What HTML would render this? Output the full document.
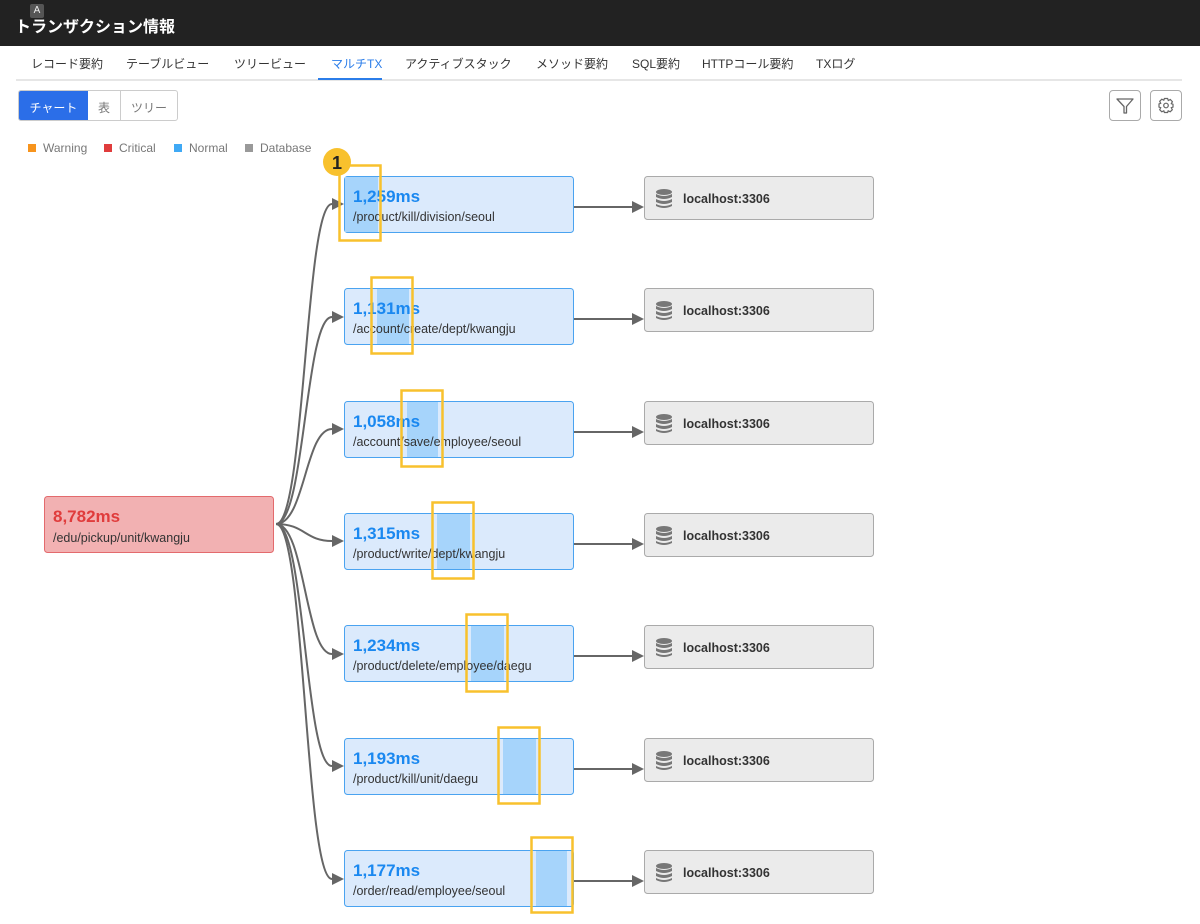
<!DOCTYPE html>
<html><head><meta charset="utf-8"><style>
*{margin:0;padding:0;box-sizing:border-box}
body{width:1200px;height:924px;background:#fff;font-family:"Liberation Sans","Noto Sans CJK JP",sans-serif;position:relative;overflow:hidden;color:#333}
.hdr{position:absolute;left:0;top:0;width:1200px;height:46px;background:#222;color:#fff;font-size:16px;font-weight:bold;padding:13px 15px}
.akey{position:absolute;left:30px;top:4px;width:14px;height:14px;background:#555;border-radius:2px;font-size:10px;font-weight:normal;text-align:center;line-height:14px;color:#eee}
.tabs{position:absolute;left:16px;top:46px;width:1166px;height:35px;border-bottom:2px solid #e6e6e6;font-size:12px}
.tab{position:absolute;top:9px;color:#333}
.tab.act{color:#2b7de9}
.uline{position:absolute;left:302px;top:32px;width:64px;height:2px;background:#2b7de9}
.seg{position:absolute;left:18px;top:90px;height:31px;display:flex;border:1px solid #ccc;border-radius:3px;overflow:hidden;font-size:12px}
.seg div{padding:8px 0;text-align:center;color:#777;border-left:1px solid #ccc}
.seg div.on{background:#2b6ee8;color:#fff;border:none}
.ib{position:absolute;top:90px;width:32px;height:31px;border:1px solid #aaa;border-radius:4px}
.lg{position:absolute;top:141px;font-size:12px;color:#777}
.lg i{display:inline-block;width:8px;height:8px;margin-right:7px;vertical-align:0}
</style></head><body>
<div class="hdr">トランザクション情報<span class="akey">A</span></div>
<div class="tabs">
<span class="tab" style="left:15px">レコード要約</span>
<span class="tab" style="left:110px">テーブルビュー</span>
<span class="tab" style="left:218px">ツリービュー</span>
<span class="tab act" style="left:315px">マルチTX</span>
<span class="tab" style="left:389px">アクティブスタック</span>
<span class="tab" style="left:520px">メソッド要約</span>
<span class="tab" style="left:616px">SQL要約</span>
<span class="tab" style="left:686px">HTTPコール要約</span>
<span class="tab" style="left:800px">TXログ</span>
<div class="uline"></div>
</div>
<div class="seg"><div class="on" style="width:69px">チャート</div><div style="border-left:none;width:32px">表</div><div style="width:57px">ツリー</div></div>
<div class="ib" style="left:1109px"><svg width="30" height="29"><path d="M7 8 H23 L16.5 15.5 V22 H14 V15.5 Z" fill="none" stroke="#666" stroke-width="1.3" stroke-linejoin="round"/></svg></div>
<div class="ib" style="left:1150px"><svg width="30" height="29"><g transform="translate(15 14.5)" fill="none" stroke="#666" stroke-width="1.2"><path d="M-1.6 -7 H1.6 L2.3 -5 L4.3 -6 L6.4 -3.8 L5.3 -1.8 L7 -1.2 V1.6 L5.3 2.2 L6.3 4.2 L4.2 6.3 L2.2 5.3 L1.6 7 H-1.6 L-2.2 5.3 L-4.2 6.3 L-6.3 4.2 L-5.3 2.2 L-7 1.6 V-1.6 L-5.3 -2.2 L-6.3 -4.2 L-4.2 -6.3 L-2.2 -5.3 Z"/><circle r="2.3"/></g></svg></div>
<div class="lg" style="left:28px"><i style="background:#f7941d"></i>Warning</div>
<div class="lg" style="left:104px"><i style="background:#e03c3c"></i>Critical</div>
<div class="lg" style="left:174px"><i style="background:#3fa9f5"></i>Normal</div>
<div class="lg" style="left:245px"><i style="background:#999"></i>Database</div>

<svg width="1200" height="924" style="position:absolute;left:0;top:0" font-family="Liberation Sans, sans-serif">
<defs><marker id="ar" markerWidth="12" markerHeight="12" refX="0" refY="6" orient="auto" markerUnits="userSpaceOnUse"><path d="M0 0 L12 6 L0 12 Z" fill="#666"/></marker>
<g id="db"><ellipse cx="0" cy="-6" rx="8" ry="3" fill="#777"/><path d="M-8 -4 Q0 0 8 -4 V-1 Q0 3 -8 -1Z M-8 1 Q0 5 8 1 V4 Q0 8 -8 4Z M-8 6 Q0 10 8 6 V8 Q0 12 -8 8Z" fill="#777"/></g></defs>
<g fill="none" stroke="#666" stroke-width="2">
<path d="M276 524 C305 524 305 204 332 204" marker-end="url(#ar)"/>
<path d="M276 524 C305 524 305 317 332 317" marker-end="url(#ar)"/>
<path d="M276 524 C305 524 305 429 332 429" marker-end="url(#ar)"/>
<path d="M276 524 C305 524 305 541 332 541" marker-end="url(#ar)"/>
<path d="M276 524 C305 524 305 654 332 654" marker-end="url(#ar)"/>
<path d="M276 524 C305 524 305 766 332 766" marker-end="url(#ar)"/>
<path d="M276 524 C305 524 305 879 332 879" marker-end="url(#ar)"/>
</g>
<rect x="44.5" y="496.5" width="229" height="56" rx="3" fill="#f2b1b2" stroke="#e36a6d"/>
<text x="53" y="522" font-size="17" font-weight="bold" fill="#e03c3c">8,782ms</text>
<text x="53" y="542" font-size="12.5" fill="#333">/edu/pickup/unit/kwangju</text>

<g font-size="17" font-weight="bold">
<g transform="translate(0,176)"><rect x="344.5" y="0.5" width="229" height="56" rx="3" fill="#dbeafc" stroke="#4aa3f0"/><rect x="345" y="1" width="33" height="55" fill="#a6d4fb"/><line x1="574" y1="31" x2="632" y2="31" stroke="#666" stroke-width="2" marker-end="url(#ar)"/><rect x="644.5" y="0.5" width="229" height="43" rx="3" fill="#ebebeb" stroke="#aaa"/><use href="#db" x="664" y="22"/><text x="683" y="27" font-size="12.5" fill="#333">localhost:3306</text><text x="353" y="26" fill="#1a88f0">1,259ms</text><text x="353" y="45" font-size="12.5" font-weight="normal" fill="#333">/product/kill/division/seoul</text><rect x="339.5" y="-10.5" width="41" height="75" fill="none" stroke="#f8c12d" stroke-width="2.5"/></g>
<g transform="translate(0,288)"><rect x="344.5" y="0.5" width="229" height="56" rx="3" fill="#dbeafc" stroke="#4aa3f0"/><rect x="377" y="1" width="32" height="55" fill="#a6d4fb"/><line x1="574" y1="31" x2="632" y2="31" stroke="#666" stroke-width="2" marker-end="url(#ar)"/><rect x="644.5" y="0.5" width="229" height="43" rx="3" fill="#ebebeb" stroke="#aaa"/><use href="#db" x="664" y="22"/><text x="683" y="27" font-size="12.5" fill="#333">localhost:3306</text><text x="353" y="26" fill="#1a88f0">1,131ms</text><text x="353" y="45" font-size="12.5" font-weight="normal" fill="#333">/account/create/dept/kwangju</text><rect x="371.5" y="-10.5" width="41" height="76" fill="none" stroke="#f8c12d" stroke-width="2.5"/></g>
<g transform="translate(0,401)"><rect x="344.5" y="0.5" width="229" height="56" rx="3" fill="#dbeafc" stroke="#4aa3f0"/><rect x="407" y="1" width="31" height="55" fill="#a6d4fb"/><line x1="574" y1="31" x2="632" y2="31" stroke="#666" stroke-width="2" marker-end="url(#ar)"/><rect x="644.5" y="0.5" width="229" height="43" rx="3" fill="#ebebeb" stroke="#aaa"/><use href="#db" x="664" y="22"/><text x="683" y="27" font-size="12.5" fill="#333">localhost:3306</text><text x="353" y="26" fill="#1a88f0">1,058ms</text><text x="353" y="45" font-size="12.5" font-weight="normal" fill="#333">/account/save/employee/seoul</text><rect x="401.5" y="-10.5" width="41" height="76" fill="none" stroke="#f8c12d" stroke-width="2.5"/></g>
<g transform="translate(0,513)"><rect x="344.5" y="0.5" width="229" height="56" rx="3" fill="#dbeafc" stroke="#4aa3f0"/><rect x="437" y="1" width="33" height="55" fill="#a6d4fb"/><line x1="574" y1="31" x2="632" y2="31" stroke="#666" stroke-width="2" marker-end="url(#ar)"/><rect x="644.5" y="0.5" width="229" height="43" rx="3" fill="#ebebeb" stroke="#aaa"/><use href="#db" x="664" y="22"/><text x="683" y="27" font-size="12.5" fill="#333">localhost:3306</text><text x="353" y="26" fill="#1a88f0">1,315ms</text><text x="353" y="45" font-size="12.5" font-weight="normal" fill="#333">/product/write/dept/kwangju</text><rect x="432.5" y="-10.5" width="41" height="76" fill="none" stroke="#f8c12d" stroke-width="2.5"/></g>
<g transform="translate(0,625)"><rect x="344.5" y="0.5" width="229" height="56" rx="3" fill="#dbeafc" stroke="#4aa3f0"/><rect x="471" y="1" width="33" height="55" fill="#a6d4fb"/><line x1="574" y1="31" x2="632" y2="31" stroke="#666" stroke-width="2" marker-end="url(#ar)"/><rect x="644.5" y="0.5" width="229" height="43" rx="3" fill="#ebebeb" stroke="#aaa"/><use href="#db" x="664" y="22"/><text x="683" y="27" font-size="12.5" fill="#333">localhost:3306</text><text x="353" y="26" fill="#1a88f0">1,234ms</text><text x="353" y="45" font-size="12.5" font-weight="normal" fill="#333">/product/delete/employee/daegu</text><rect x="466.5" y="-10.5" width="41" height="77" fill="none" stroke="#f8c12d" stroke-width="2.5"/></g>
<g transform="translate(0,738)"><rect x="344.5" y="0.5" width="229" height="56" rx="3" fill="#dbeafc" stroke="#4aa3f0"/><rect x="503" y="1" width="33" height="55" fill="#a6d4fb"/><line x1="574" y1="31" x2="632" y2="31" stroke="#666" stroke-width="2" marker-end="url(#ar)"/><rect x="644.5" y="0.5" width="229" height="43" rx="3" fill="#ebebeb" stroke="#aaa"/><use href="#db" x="664" y="22"/><text x="683" y="27" font-size="12.5" fill="#333">localhost:3306</text><text x="353" y="26" fill="#1a88f0">1,193ms</text><text x="353" y="45" font-size="12.5" font-weight="normal" fill="#333">/product/kill/unit/daegu</text><rect x="498.5" y="-10.5" width="41" height="76" fill="none" stroke="#f8c12d" stroke-width="2.5"/></g>
<g transform="translate(0,850)"><rect x="344.5" y="0.5" width="229" height="56" rx="3" fill="#dbeafc" stroke="#4aa3f0"/><rect x="536" y="1" width="31" height="55" fill="#a6d4fb"/><line x1="574" y1="31" x2="632" y2="31" stroke="#666" stroke-width="2" marker-end="url(#ar)"/><rect x="644.5" y="0.5" width="229" height="43" rx="3" fill="#ebebeb" stroke="#aaa"/><use href="#db" x="664" y="22"/><text x="683" y="27" font-size="12.5" fill="#333">localhost:3306</text><text x="353" y="26" fill="#1a88f0">1,177ms</text><text x="353" y="45" font-size="12.5" font-weight="normal" fill="#333">/order/read/employee/seoul</text><rect x="531.5" y="-12.5" width="41" height="75" fill="none" stroke="#f8c12d" stroke-width="2.5"/></g>
</g>
<circle cx="337" cy="162" r="14" fill="#f8c12d"/>
<text x="337" y="169" font-size="18" font-weight="bold" fill="#222" text-anchor="middle">1</text>
</svg>
</body></html>
